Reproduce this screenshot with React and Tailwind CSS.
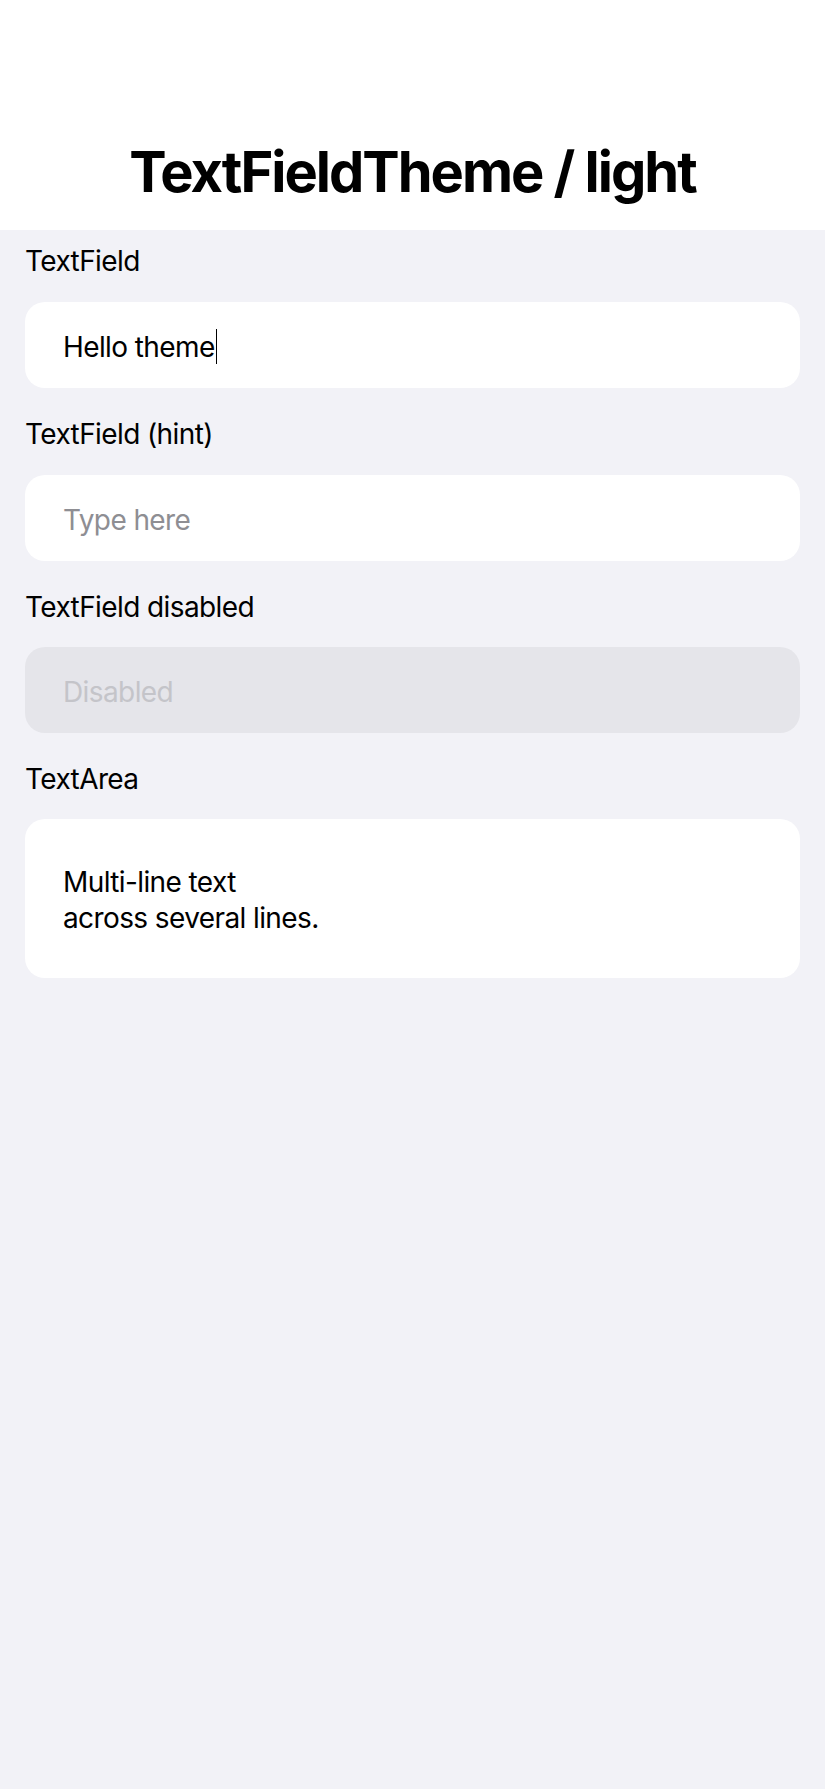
import React from "react";

const font = { fontFamily: "Inter, 'Noto Sans', sans-serif" };

function Label({ children }) {
  return (
    <div className="text-[28px] leading-[34px] tracking-[-0.6px] text-black">{children}</div>
  );
}

function Field({ children, className = "", textClass = "text-black" }) {
  return (
    <div className={`h-[86px] rounded-[20px] flex items-center pl-[38px] pt-[4px] ${className}`}>
      <div className={`text-[28px] leading-[34px] tracking-[-0.6px] ${textClass}`}>{children}</div>
    </div>
  );
}

export default function App() {
  return (
    <div className="min-h-[1789px] bg-[#f2f2f7]" style={font}>
      <header className="h-[230px] bg-white pt-[144px]">
        <h1 className="text-center text-[56px] leading-[56px] font-bold tracking-[-2px] text-black">
          TextFieldTheme / light
        </h1>
      </header>
      <main className="px-[25px] pt-[14px] flex flex-col">
        <Label>TextField</Label>
        <div className="mt-[24px]">
          <Field className="bg-white">
            <span>Hello theme</span>
            <span className="inline-block w-[1px] h-[35px] bg-black align-middle ml-[1px] -mt-[4px]"></span>
          </Field>
        </div>
        <div className="mt-[29px]">
          <Label>TextField (hint)</Label>
        </div>
        <div className="mt-[24px]">
          <Field className="bg-white" textClass="text-[#8e8e93]">Type here</Field>
        </div>
        <div className="mt-[29px]">
          <Label>TextField disabled</Label>
        </div>
        <div className="mt-[23px]">
          <Field className="bg-[#e5e5ea]" textClass="text-[#c4c4c9]">Disabled</Field>
        </div>
        <div className="mt-[29px]">
          <Label>TextArea</Label>
        </div>
        <div className="mt-[23px] bg-white rounded-[20px] h-[159px] pl-[38px] pt-[45px]">
          <div className="text-[28px] leading-[36px] tracking-[-0.6px] text-black">
            <div>Multi-line text</div>
            <div>across several lines.</div>
          </div>
        </div>
      </main>
    </div>
  );
}
